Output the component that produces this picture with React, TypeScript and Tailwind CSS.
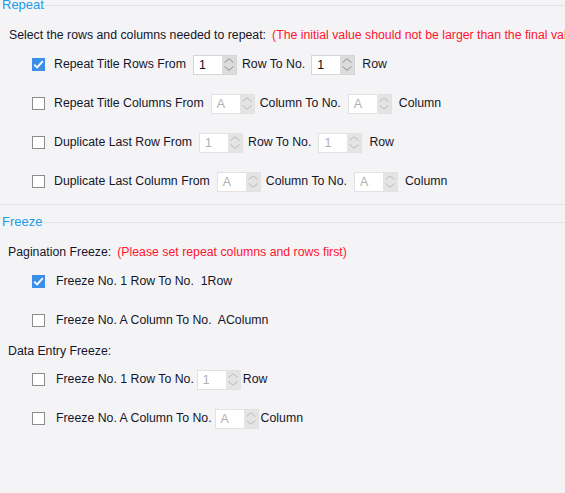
import React from "react";

// Ô nhập số có nút tăng/giảm
const Spinner = ({ value, disabled }: { value: string; disabled?: boolean }) => (
  <div
    className={`flex h-[20px] border ${
      disabled ? "border-[#e2e2e2]" : "border-[#d6d6d6]"
    }`}
  >
    <div
      className={`w-[28px] bg-white pl-[5px] text-[12.4px] leading-[18px] ${
        disabled ? "text-[#b0b0b0]" : "text-[#111]"
      }`}
    >
      {value}
    </div>
    <div
      className={`flex w-[14px] flex-col items-center justify-center gap-[3px] ${
        disabled ? "bg-[#e4e4e4]" : "bg-[#dcdcdc]"
      }`}
    >
      <svg width="10" height="5" viewBox="0 0 10 5">
        <path d="M0.5 4.5 L5 0.8 L9.5 4.5" fill="none" stroke={disabled ? "#b8b8b8" : "#8a8a8a"} strokeWidth="1" />
      </svg>
      <svg width="10" height="5" viewBox="0 0 10 5">
        <path d="M0.5 0.5 L5 4.2 L9.5 0.5" fill="none" stroke={disabled ? "#b8b8b8" : "#8a8a8a"} strokeWidth="1" />
      </svg>
    </div>
  </div>
);

const Check = ({ checked }: { checked?: boolean }) =>
  checked ? (
    <div className="flex h-[13px] w-[13px] items-center justify-center bg-[#3d8ee8]">
      <svg width="11" height="9" viewBox="0 0 11 9">
        <path d="M1.2 4.6 L4.2 7.4 L9.8 1.2" fill="none" stroke="#fff" strokeWidth="1.8" />
      </svg>
    </div>
  ) : (
    <div className="h-[13px] w-[13px] border border-[#8c8c8c] bg-white" />
  );

const Row = ({
  checked,
  gap = "gap-[9px]",
  children,
}: {
  checked?: boolean;
  gap?: string;
  children: React.ReactNode;
}) => (
  <div className={`flex h-[39px] items-center pl-[32px] ${gap}`}>
    <Check checked={checked} />
    <div className="flex items-center">{children}</div>
  </div>
);

const SectionTitle = ({ title }: { title: string }) => (
  <div className="flex items-center">
    <span className="pl-[2px] text-[13px] leading-[14px] text-[#1a9be6]">{title}</span>
    <div className="ml-[1px] h-px flex-1 bg-[#e2e2e4]" />
  </div>
);

export default function App() {
  return (
    <div
      className="h-[493px] w-[565px] overflow-hidden bg-[#f4f4f6] text-[12.3px] text-[#16162a]"
      style={{ fontFamily: '"Liberation Sans", Arial, sans-serif' }}
    >
      {/* Repeat */}
      <div className="-mt-[2px]">
        <SectionTitle title="Repeat" />
      </div>
      <div className="mt-[16px] flex whitespace-nowrap pl-[9px] leading-[14px]">
        <span>Select the rows and columns needed to repeat:</span>
        <span className="ml-[6px] text-[#ff1530]">
          (The initial value should not be larger than the final value)
        </span>
      </div>
      <div className="mt-[3px]">
        <Row checked>
          <span>Repeat Title Rows From</span>
          <span className="ml-[7px]"><Spinner value="1" /></span>
          <span className="ml-[5px]">Row To No.</span>
          <span className="ml-[6px]"><Spinner value="1" /></span>
          <span className="ml-[7px]">Row</span>
        </Row>
        <Row>
          <span>Repeat Title Columns From</span>
          <span className="ml-[7px]"><Spinner value="A" disabled /></span>
          <span className="ml-[5px]">Column To No.</span>
          <span className="ml-[7px]"><Spinner value="A" disabled /></span>
          <span className="ml-[7px]">Column</span>
        </Row>
        <Row>
          <span>Duplicate Last Row From</span>
          <span className="ml-[7px]"><Spinner value="1" disabled /></span>
          <span className="ml-[5px]">Row To No.</span>
          <span className="ml-[7px]"><Spinner value="1" disabled /></span>
          <span className="ml-[7px]">Row</span>
        </Row>
        <Row>
          <span>Duplicate Last Column From</span>
          <span className="ml-[7px]"><Spinner value="A" disabled /></span>
          <span className="ml-[5px]">Column To No.</span>
          <span className="ml-[7px]"><Spinner value="A" disabled /></span>
          <span className="ml-[7px]">Column</span>
        </Row>
      </div>
      <div className="mt-[3px] h-px bg-[#e2e2e4]" />

      {/* Freeze */}
      <div className="mt-[10px]">
        <SectionTitle title="Freeze" />
      </div>
      <div className="mt-[16px] flex pl-[8px] leading-[14px]">
        <span>Pagination Freeze:</span>
        <span className="ml-[6px] text-[#ff1530]">(Please set repeat columns and rows first)</span>
      </div>
      <div className="mt-[3px]">
        <Row checked gap="gap-[11px]">
          <span>Freeze No. 1 Row To No.&nbsp; 1Row</span>
        </Row>
        <Row gap="gap-[11px]">
          <span>Freeze No. A Column To No.&nbsp; AColumn</span>
        </Row>
      </div>
      <div className="mt-[4px] pl-[8px] leading-[14px]">Data Entry Freeze:</div>
      <div className="mt-[2px]">
        <Row gap="gap-[11px]">
          <span>Freeze No. 1 Row To No.</span>
          <span className="ml-[3px]"><Spinner value="1" disabled /></span>
          <span className="ml-[2px]">Row</span>
        </Row>
        <Row gap="gap-[11px]">
          <span>Freeze No. A Column To No.</span>
          <span className="ml-[3px]"><Spinner value="A" disabled /></span>
          <span className="ml-[2px]">Column</span>
        </Row>
      </div>
    </div>
  );
}
